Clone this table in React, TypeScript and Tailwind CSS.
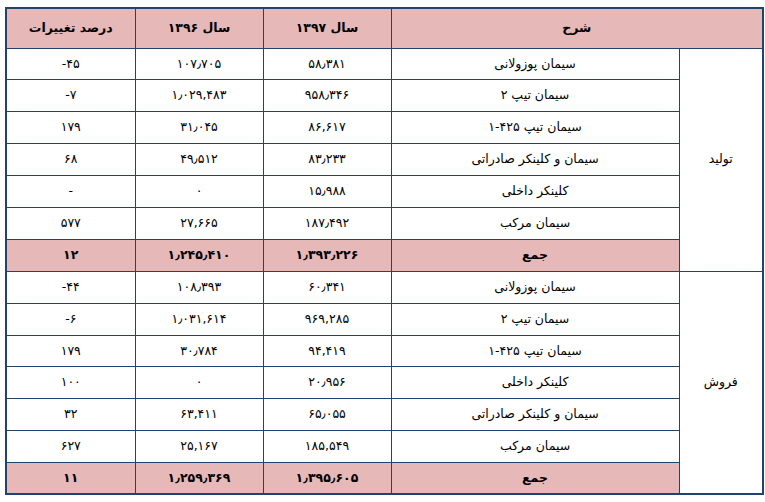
type Row = { name: string; y97: string; y96: string; pct: string };

const production: Row[] = [
  { name: "سیمان پوزولانی", y97: "۵۸٫۳۸۱", y96: "۱۰۷٫۷۰۵", pct: "-۴۵" },
  { name: "سیمان تیپ ۲", y97: "۹۵۸٫۳۴۶", y96: "۱٫۰۲۹,۴۸۳", pct: "-۷" },
  { name: "سیمان تیپ ۴۲۵-۱", y97: "۸۶,۶۱۷", y96: "۳۱٫۰۴۵", pct: "۱۷۹" },
  { name: "سیمان و کلینکر صادراتی", y97: "۸۳٫۲۳۳", y96: "۴۹٫۵۱۲", pct: "۶۸" },
  { name: "کلینکر داخلی", y97: "۱۵٫۹۸۸", y96: "۰", pct: "-" },
  { name: "سیمان مرکب", y97: "۱۸۷٫۴۹۲", y96: "۲۷,۶۶۵", pct: "۵۷۷" },
];

const sales: Row[] = [
  { name: "سیمان پوزولانی", y97: "۶۰٫۳۴۱", y96: "۱۰۸٫۳۹۳", pct: "-۴۴" },
  { name: "سیمان تیپ ۲", y97: "۹۶۹,۲۸۵", y96: "۱٫۰۳۱,۶۱۴", pct: "-۶" },
  { name: "سیمان تیپ ۴۲۵-۱", y97: "۹۴,۴۱۹", y96: "۳۰٫۷۸۴", pct: "۱۷۹" },
  { name: "کلینکر داخلی", y97: "۲۰٫۹۵۶", y96: "۰", pct: "۱۰۰" },
  { name: "سیمان و کلینکر صادراتی", y97: "۶۵٫۰۵۵", y96: "۶۳,۴۱۱", pct: "۳۲" },
  { name: "سیمان مرکب", y97: "۱۸۵,۵۴۹", y96: "۲۵,۱۶۷", pct: "۶۲۷" },
];

const cell = "border border-[#23436f] h-[31.9px] p-0 text-center align-middle";
const head = "border border-[#23436f] h-[40px] p-0 text-center align-middle";

function Group({ label, rows, total }: { label: string; rows: Row[]; total: Row }) {
  return (
    <>
      {rows.map((r, i) => (
        <tr key={i}>
          {i === 0 && (
            <td rowSpan={rows.length + 1} className={cell}>
              {label}
            </td>
          )}
          <td className={cell}>{r.name}</td>
          <td className={cell}><span dir="ltr">{r.y97}</span></td>
          <td className={cell}><span dir="ltr">{r.y96}</span></td>
          <td className={cell}><span dir="ltr">{r.pct}</span></td>
        </tr>
      ))}
      <tr className="bg-[#e6b8b7] font-bold">
        <td className={cell}>{total.name}</td>
        <td className={cell}><span dir="ltr">{total.y97}</span></td>
        <td className={cell}><span dir="ltr">{total.y96}</span></td>
        <td className={cell}><span dir="ltr">{total.pct}</span></td>
      </tr>
    </>
  );
}

export default function App() {
  return (
    <div className="w-[765px] h-[502px] bg-white pt-[7px] pl-[5px]">
      <table
        dir="rtl"
        className="w-[757px] table-fixed border-collapse border-2 border-[#23436f] text-[12.5px] text-black"
        style={{ fontFamily: '"DejaVu Sans", sans-serif' }}
      >
        <colgroup>
          <col className="w-[84px]" />
          <col className="w-[288px]" />
          <col className="w-[128px]" />
          <col className="w-[128px]" />
          <col className="w-[129px]" />
        </colgroup>
        <thead>
          <tr className="bg-[#e6b8b7] font-bold">
            <th colSpan={2} className={head}>شرح</th>
            <th className={head}>سال ۱۳۹۷</th>
            <th className={head}>سال ۱۳۹۶</th>
            <th className={head}>درصد تغییرات</th>
          </tr>
        </thead>
        <tbody>
          <Group
            label="تولید"
            rows={production}
            total={{ name: "جمع", y97: "۱٫۳۹۳٫۲۲۶", y96: "۱٫۲۴۵٫۴۱۰", pct: "۱۲" }}
          />
          <Group
            label="فروش"
            rows={sales}
            total={{ name: "جمع", y97: "۱٫۳۹۵٫۶۰۵", y96: "۱٫۲۵۹٫۳۶۹", pct: "۱۱" }}
          />
        </tbody>
      </table>
    </div>
  );
}
